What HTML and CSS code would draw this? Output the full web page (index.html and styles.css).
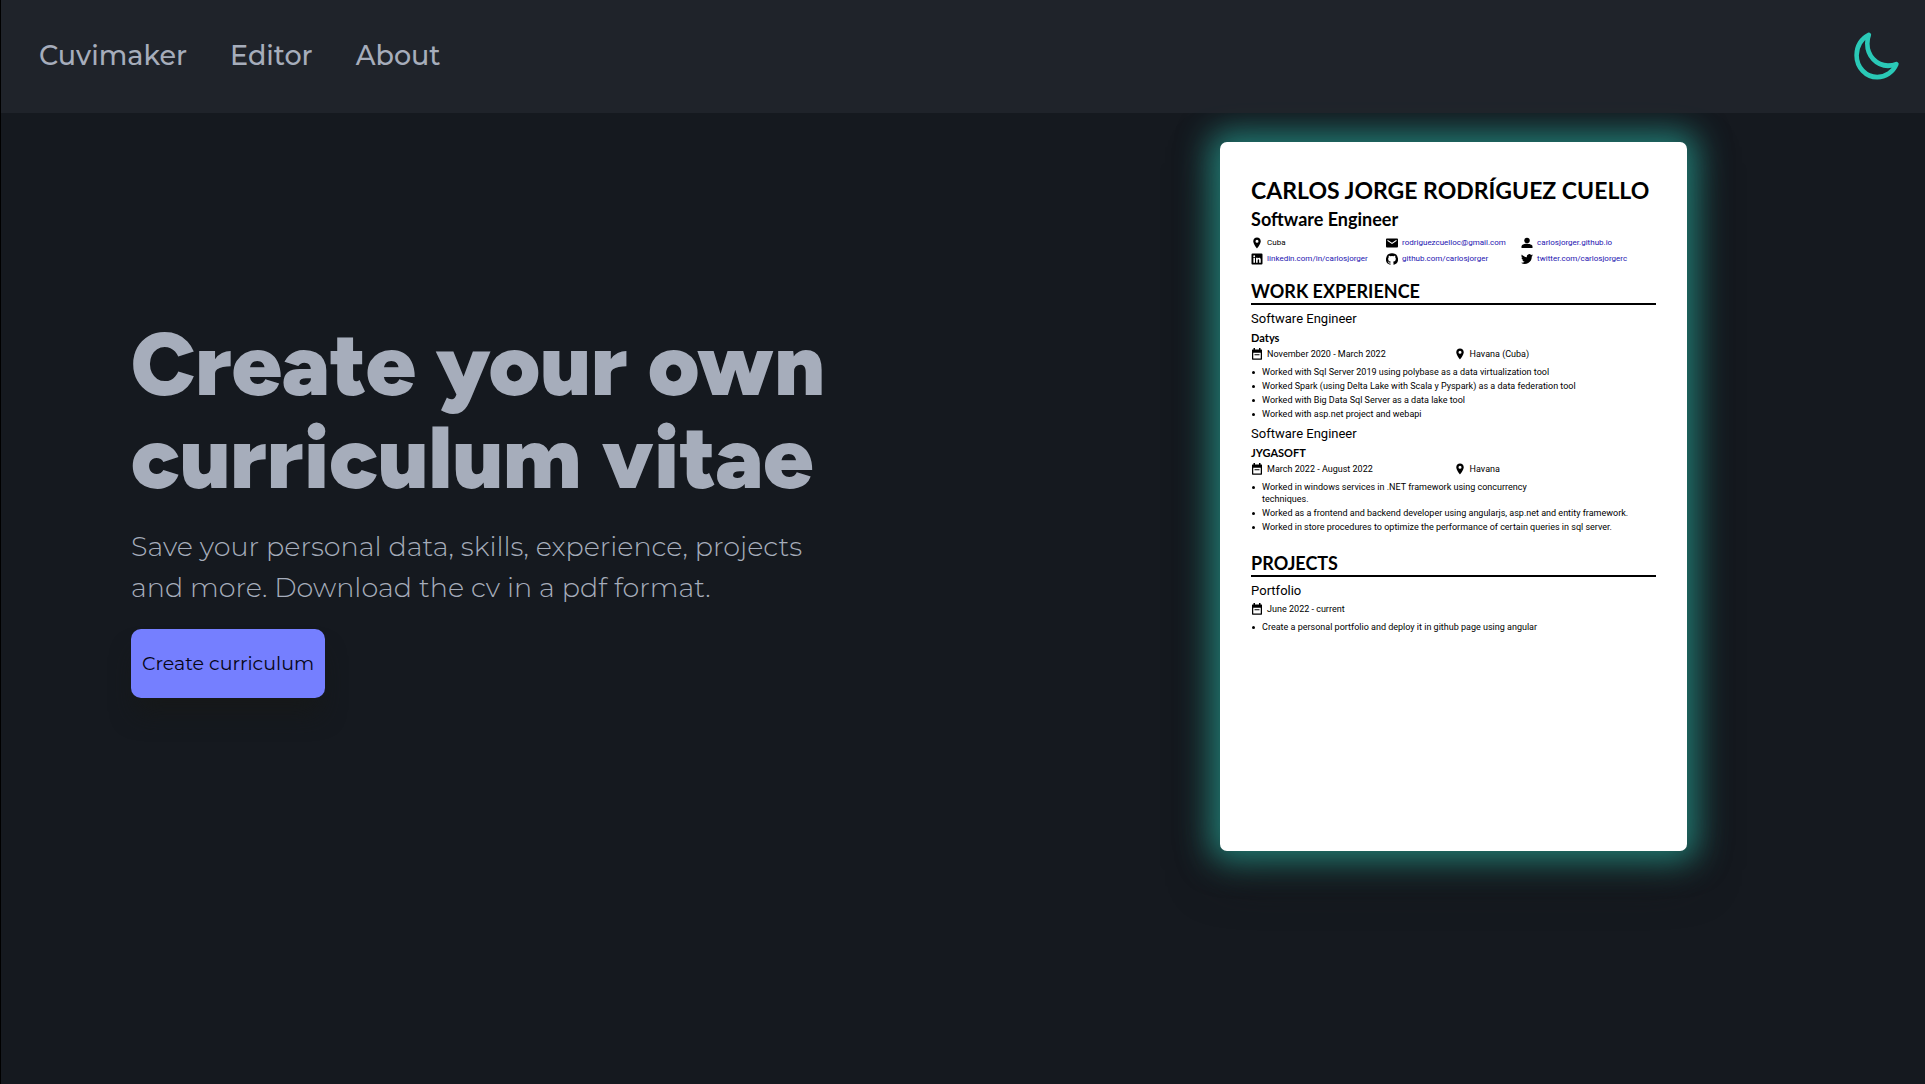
FILE: index.html
```html
<!DOCTYPE html>
<html lang="en">
<head>
<meta charset="utf-8">
<meta name="viewport" content="width=device-width, initial-scale=1">
<title>Cuvimaker</title>
<link rel="stylesheet" href="styles.css">
</head>
<body>
<svg class="sprite" aria-hidden="true">
  <symbol id="pin" viewBox="0 0 24 24"><path d="M12 1C7.600 1 4.500 4.300 4.500 8.500 4.500 14 12 23 12 23s7.500-9 7.500-14.500C19.500 4.300 16.400 1 12 1zm0 10.500a3 3 0 1 1 0-6 3 3 0 0 1 0 6z"/></symbol>
  <symbol id="mail" viewBox="0 0 24 24"><path d="M22 3H2C1 3 0 4 0 5v14c0 1 1 2 2 2h20c1 0 2-1 2-2V5c0-1-1-2-2-2zm-1 5-9 6-9-6V5.500l9 6 9-6z"/></symbol>
  <symbol id="person" viewBox="0 0 24 24"><circle cx="12" cy="7" r="5.500"/><path d="M1 22v-3c0-4 7-5.500 11-5.500S23 15 23 19v3z"/></symbol>
  <symbol id="linkedin" viewBox="0 0 24 24"><path d="M21 1H3a2 2 0 0 0-2 2v18c0 1.100.9 2 2 2h18a2 2 0 0 0 2-2V3a2 2 0 0 0-2-2zM8 19.500H4.800V9.600H8zM6.400 8.200a1.900 1.900 0 1 1 0-3.800 1.900 1.900 0 0 1 0 3.800zM19.500 19.500h-3.200v-5.200c0-2.700-3-2.500-3 0v5.200h-3.200V9.600h3.200v1.500c1.300-2.300 6.200-2.500 6.200 2.300z"/></symbol>
  <symbol id="github" viewBox="0 0 24 24"><path d="M12 .3a12 12 0 0 0-3.800 23.400c.6.100.8-.3.8-.6v-2.200c-3.300.7-4-1.400-4-1.400-.6-1.400-1.400-1.800-1.400-1.800-1-.7.100-.7.100-.7 1.200 0 1.900 1.200 1.900 1.200 1 1.800 2.800 1.300 3.500 1 0-.8.400-1.300.7-1.600-2.700-.3-5.500-1.300-5.500-6 0-1.200.5-2.300 1.300-3.100-.2-.4-.6-1.600 0-3.200 0 0 1-.3 3.400 1.200a11.500 11.500 0 0 1 6 0c2.300-1.500 3.300-1.200 3.300-1.200.6 1.600.2 2.800 0 3.200.9.800 1.300 1.900 1.300 3.200 0 4.600-2.800 5.600-5.500 5.900.5.400.9 1 .9 2.200v3.300c0 .3.100.7.800.6A12 12 0 0 0 12 .3"/></symbol>
  <symbol id="twitter" viewBox="0 0 24 24"><path d="M24 4.600a10 10 0 0 1-2.800.8 5 5 0 0 0 2.100-2.700c-1 .6-2 1-3.100 1.200a4.900 4.900 0 0 0-8.400 4.500C7.700 8.200 4.100 6.200 1.700 3.200a4.900 4.900 0 0 0 1.500 6.500c-.8 0-1.600-.2-2.200-.6a4.900 4.900 0 0 0 3.900 4.900c-.7.200-1.500.2-2.200.1a4.900 4.900 0 0 0 4.600 3.400A9.900 9.900 0 0 1 0 19.500a14 14 0 0 0 21.500-12.400c1-.7 1.800-1.600 2.500-2.500z"/></symbol>
  <symbol id="calendar" viewBox="0 0 24 24"><path d="M21 3h-2V0h-3v3H8V0H5v3H3a1 1 0 0 0-1 1v18c0 1 .5 1.500 1 1.500h18c.6 0 1-.5 1-1.500V4a1 1 0 0 0-1-1zm-1.500 18h-15V9.500h15zM7 12.500h10v2H7z"/></symbol>
</svg>

<header class="navbar">
  <nav class="nav-links">
    <a href="#">Cuvimaker</a>
    <a href="#">Editor</a>
    <a href="#">About</a>
  </nav>
  <button class="theme-toggle" type="button" aria-label="Toggle dark mode">
    <svg viewBox="0 0 512 512" preserveAspectRatio="none"><path d="M160 136c0-30.620 4.510-61.610 16-88C99.570 81.270 48 159.320 48 248c0 119.290 96.710 216 216 216 88.680 0 166.730-51.570 200-128-26.390 11.490-57.380 16-88 16-119.290 0-216-96.710-216-216z"/></svg>
  </button>
</header>

<main class="hero">
  <section class="intro">
    <h1>Create your own<br>curriculum vitae</h1>
    <p>Save your personal data, skills, experience, projects<br>and more. Download the cv in a pdf format.</p>
    <button class="cta" type="button">Create curriculum</button>
  </section>

  <article class="resume">
    <h2>CARLOS JORGE RODRÍGUEZ CUELLO</h2>
    <p class="role">Software Engineer</p>
    <address class="contacts">
      <span class="item"><svg><use href="#pin"/></svg>Cuba</span>
      <span class="item"><svg><use href="#mail"/></svg><a href="#">rodriguezcuelloc@gmail.com</a></span>
      <span class="item"><svg><use href="#person"/></svg><a href="#">carlosjorger.github.io</a></span>
      <span class="item"><svg><use href="#linkedin"/></svg><a href="#">linkedin.com/in/carlosjorger</a></span>
      <span class="item"><svg><use href="#github"/></svg><a href="#">github.com/carlosjorger</a></span>
      <span class="item"><svg><use href="#twitter"/></svg><a href="#">twitter.com/carlosjorgerc</a></span>
    </address>

    <section class="block">
      <h3>WORK EXPERIENCE</h3>
      <div class="entry">
        <h4>Software Engineer</h4>
        <p class="company">Datys</p>
        <div class="meta">
          <span class="item"><svg><use href="#calendar"/></svg>November 2020 - March 2022</span>
          <span class="item"><svg><use href="#pin"/></svg>Havana (Cuba)</span>
        </div>
        <ul>
          <li>Worked with Sql Server 2019 using polybase as a data virtualization tool</li>
          <li>Worked Spark (using Delta Lake with Scala y Pyspark) as a data federation tool</li>
          <li>Worked with Big Data Sql Server as a data lake tool</li>
          <li>Worked with asp.net project and webapi</li>
        </ul>
      </div>
      <div class="entry">
        <h4>Software Engineer</h4>
        <p class="company">JYGASOFT</p>
        <div class="meta">
          <span class="item"><svg><use href="#calendar"/></svg>March 2022 - August 2022</span>
          <span class="item"><svg><use href="#pin"/></svg>Havana</span>
        </div>
        <ul>
          <li>Worked in windows services in .NET framework using concurrency<br>techniques.</li>
          <li>Worked as a frontend and backend developer using angularjs, asp.net and entity framework.</li>
          <li>Worked in store procedures to optimize the performance of certain queries in sql server.</li>
        </ul>
      </div>
    </section>

    <section class="block projects">
      <h3>PROJECTS</h3>
      <div class="entry">
        <h4>Portfolio</h4>
        <div class="meta">
          <span class="item"><svg><use href="#calendar"/></svg>June 2022 - current</span>
        </div>
        <ul>
          <li>Create a personal portfolio and deploy it in github page using angular</li>
        </ul>
      </div>
    </section>
  </article>
</main>
</body>
</html>
```
FILE: styles.css
```css
* {
  box-sizing: border-box;
  margin: 0;
  padding: 0;
}

body {
  min-height: 100vh;
  border-left: 1px solid #000;
  background: #15191f;
  color: #a6adbb;
  font-family: Montserrat, Inter, sans-serif;
}

.sprite {
  display: none;
}

.navbar {
  position: relative;
  z-index: 1;
  display: flex;
  align-items: center;
  justify-content: space-between;
  height: 113px;
  padding: 0 24px 2px 38px;
  background: rgba(32, 37, 43, 0.9);
}

.nav-links {
  display: flex;
  gap: 43px;
}

.nav-links a {
  color: inherit;
  font-size: 27px;
  font-weight: 500;
  text-decoration: none;
}

.theme-toggle {
  border: 0;
  background: none;
  cursor: pointer;
}

.theme-toggle svg {
  display: block;
  width: 49px;
  height: 52px;
  fill: none;
  stroke: #2ac9b7;
  stroke-width: 48;
  stroke-linejoin: round;
}

.hero {
  display: grid;
  grid-template-columns: 51fr 49fr;
  align-items: center;
  padding-top: 29px;
}

.intro {
  padding: 22px 0 0 130px;
}

.intro h1 {
  font-family: Figtree, Lato, sans-serif;
  font-size: 88px;
  font-weight: 900;
  line-height: 93px;
  white-space: nowrap;
}

.intro p {
  margin: 22px 0 21px;
  font-size: 27px;
  font-weight: 300;
  line-height: 41px;
  white-space: nowrap;
}

.cta {
  height: 69px;
  padding: 0 11px;
  border: 0;
  border-radius: 10px;
  background: #757fff;
  box-shadow: 0 20px 25px -5px rgba(22, 24, 24, 0.9);
  color: #060614;
  font: 400 19px Montserrat, Inter, sans-serif;
  cursor: pointer;
}

.resume {
  justify-self: center;
  width: 467px;
  min-height: 709px;
  padding: 32px 31px;
  border-radius: 7px;
  background: #fff;
  box-shadow: 0 0 32px 10px rgba(42, 201, 183, 0.56), 0 20px 50px #16191b;
  color: #000;
  font: 9px/12px Roboto, sans-serif;
}

.resume h2 {
  font: 700 23px/32px Lato, sans-serif;
  white-space: nowrap;
}

.role {
  font: 700 18px/26px Lato, sans-serif;
}

.contacts {
  display: grid;
  grid-template-columns: repeat(3, 1fr);
  margin-top: 3px;
  font-size: 8px;
  font-style: normal;
  line-height: 16px;
}

.contacts a {
  color: #2414b0;
  text-decoration: none;
}

.item {
  display: flex;
  align-items: center;
  gap: 4px;
  white-space: nowrap;
}

.item svg {
  width: 12px;
  height: 12px;
}

.block {
  margin-top: 12px;
}

.projects {
  margin-top: 18px;
}

.block h3 {
  border-bottom: 2px solid #000;
  font: 700 18px/24px Lato, sans-serif;
}

.entry {
  padding-top: 4px;
}

.entry h4 {
  font-size: 13px;
  font-weight: 400;
  line-height: 20px;
}

.company {
  font: 700 11px/17px Lato, sans-serif;
}

.meta {
  display: grid;
  grid-template-columns: 1fr 1fr;
  font-size: 9px;
  line-height: 16px;
}

.entry ul {
  display: grid;
  gap: 2px;
  padding: 4px 0 0 11px;
  list-style: none;
}

.entry li {
  white-space: nowrap;
}

.entry li::before {
  content: "";
  float: left;
  width: 3px;
  height: 3px;
  margin: 5px 0 0 -10px;
  border-radius: 50%;
  background: #000;
}
```
